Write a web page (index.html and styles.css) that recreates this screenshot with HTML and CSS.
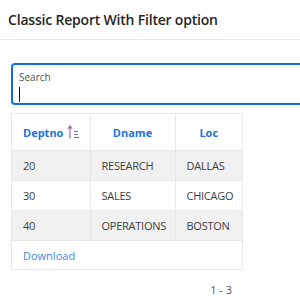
FILE: index.html
```html
<!DOCTYPE html>
<html lang="en">
<head>
  <meta charset="UTF-8">
  <title>Classic Report With Filter option</title>
  <link rel="stylesheet" href="styles.css">
</head>
<body>

  <div class="region-header">
    <h2>Classic Report With Filter option</h2>
  </div>

  <!-- Search field -->
  <div class="search-box">
    <label for="search">Search</label>
    <div class="search-input">
      <span class="caret"></span>
      <input type="text" id="search">
    </div>
  </div>

  <!-- Report -->
  <div class="report">
    <table>
      <colgroup>
        <col class="c1"><col class="c2"><col>
      </colgroup>
      <thead>
        <tr>
          <th class="left">Deptno
            <svg class="sort-icon" width="12" height="14" viewBox="0 0 12 14">
              <path d="M3 13.5V1.5M0.8 4L3 1L5.2 4" fill="none" stroke="#a35fa8" stroke-width="1.1"/>
              <path d="M7 6.5h4M7 9.5h4M7 12.5h5" stroke="#6f6f80" stroke-width="1"/>
            </svg>
          </th>
          <th>Dname</th>
          <th>Loc</th>
        </tr>
      </thead>
      <tbody>
        <tr class="odd"><td>20</td><td>RESEARCH</td><td>DALLAS</td></tr>
        <tr><td>30</td><td>SALES</td><td>CHICAGO</td></tr>
        <tr class="odd"><td>40</td><td>OPERATIONS</td><td>BOSTON</td></tr>
      </tbody>
    </table>
    <div class="report-footer">
      <a href="#">Download</a>
    </div>
  </div>

  <div class="pagination">1 - 3</div>

</body>
</html>
```

FILE: styles.css
```css
body {
  margin: 0;
  font-family: "Open Sans", Arial, sans-serif;
  color: #404040;
  background: #fff;
  overflow: hidden;
}

.region-header {
  height: 39px;
  border-bottom: 1px solid #ececec;
  padding: 0 8px;
  display: flex;
  align-items: center;
}

h2 {
  margin: 0;
  font-size: 14px;
  font-weight: 600;
  color: #262626;
  letter-spacing: -0.2px;
}

.search-box {
  margin: 23px 0 0 11px;
  width: 300px;
  height: 42px;
  box-sizing: border-box;
  border: 2px solid #0e6fd8;
  border-radius: 4px;
  padding: 6px 6px 0;
}

.search-box label {
  display: block;
  font-size: 10px;
  color: #505050;
  line-height: 12px;
}

.search-input {
  display: flex;
  align-items: center;
  margin-top: 3px;
  height: 16px;
}

.caret {
  width: 1px;
  height: 15px;
  background: #111;
  flex: none;
}

.search-input input {
  border: none;
  outline: none;
  padding: 0;
  width: 100%;
  font: 12px "Open Sans", Arial, sans-serif;
}

.report {
  margin: 8px 0 0 11px;
  width: 232px;
  border: 1px solid #e8e8e8;
  box-sizing: border-box;
}

table {
  width: 100%;
  border-collapse: collapse;
  table-layout: fixed;
}

col.c1 { width: 78px; }
col.c2 { width: 85px; }

th {
  height: 36px;
  font-size: 11px;
  font-weight: 700;
  color: #1b73e0;
  text-align: center;
  border-right: 1px solid #e8e8e8;
  border-bottom: 1px solid #e8e8e8;
  padding: 0 4px;
}

th.left {
  text-align: left;
  padding-left: 11px;
}

.sort-icon {
  vertical-align: -2px;
  margin-left: 1px;
}

td {
  height: 29px;
  font-size: 11px;
  letter-spacing: -0.25px;
  padding: 0 11px;
  border-right: 1px solid #e8e8e8;
  border-bottom: 1px solid #e8e8e8;
  white-space: nowrap;
  overflow: hidden;
}

th:last-child, td:last-child {
  border-right: none;
}

tr.odd td {
  background: #f1f1f1;
}

.report-footer {
  height: 28px;
  display: flex;
  align-items: center;
  padding-left: 11px;
}

.report-footer a {
  color: #3d86e0;
  font-size: 11px;
  text-decoration: none;
}

.pagination {
  width: 232px;
  margin: 12px 0 0 0;
  text-align: right;
  font-size: 11px;
  color: #505050;
}
```
